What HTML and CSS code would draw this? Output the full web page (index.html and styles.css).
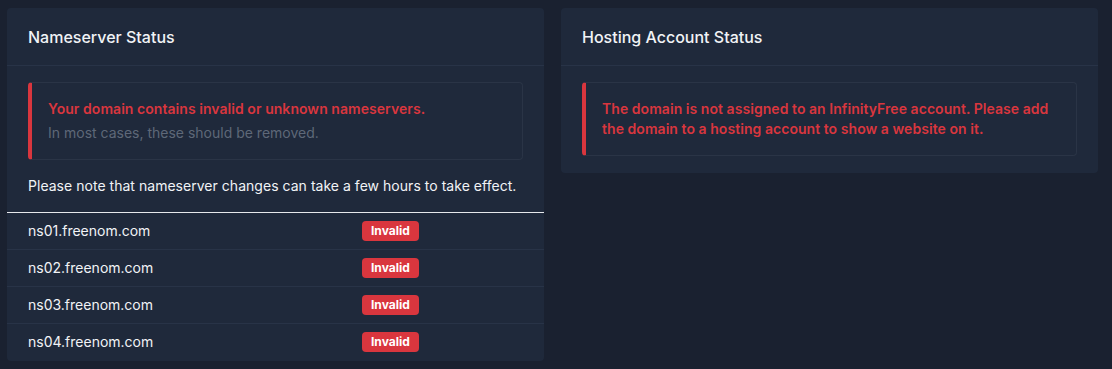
FILE: index.html
```html
<!DOCTYPE html>
<html lang="en">
<head>
  <meta charset="UTF-8"/>
  <title>Domain Status</title>
  <link rel="stylesheet" href="styles.css">
</head>
<body>
  <div class="grid">
    <div class="card">
      <div class="card-header">Nameserver Status</div>
      <div class="card-body">
        <div class="alert">
          <p class="alert-title">Your domain contains invalid or unknown nameservers.</p>
          <p class="alert-sub">In most cases, these should be removed.</p>
        </div>
        <p class="note">Please note that nameserver changes can take a few hours to take effect.</p>
      </div>
      <div class="ns-table">
        <div class="ns-row"><span>ns01.freenom.com</span><span class="badge">Invalid</span></div>
        <div class="ns-row"><span>ns02.freenom.com</span><span class="badge">Invalid</span></div>
        <div class="ns-row"><span>ns03.freenom.com</span><span class="badge">Invalid</span></div>
        <div class="ns-row"><span>ns04.freenom.com</span><span class="badge">Invalid</span></div>
      </div>
    </div>

    <div class="card">
      <div class="card-header">Hosting Account Status</div>
      <div class="card-body card-body-last">
        <div class="alert">
          <p class="alert-title">The domain is not assigned to an InfinityFree account. Please add the domain to a hosting account to show a website on it.</p>
        </div>
      </div>
    </div>
  </div>
</body>
</html>
```

FILE: styles.css
```css
* { box-sizing:border-box; margin:0; padding:0 }
html, body {
  width:100%; height:100%;
  font-family:'Inter', 'Liberation Sans', sans-serif;
  background:#1a2130; color:#f1f3f6;
  font-size:14px; line-height:20px;
}
.grid {
  display:grid; grid-template-columns:537px 537px; gap:17px;
  align-items:start; padding:8px 14px 0 7px;
}
.card { background:#1f293b; border-radius:4px; overflow:hidden }
.card-header {
  padding:19px 21px 18px; font-size:16px; font-weight:500; line-height:20px;
  border-bottom:1px solid #283347;
}
.card-body { padding:16px 21px }
.card-body-last { padding-bottom:17px }
.alert {
  border:1px solid #2a3446; border-left:4px solid #d9363e; border-radius:4px;
  padding:16px;
}
.alert-title { color:#d9363e; font-weight:600; letter-spacing:.05px }
.alert-sub { color:#5e6878; margin-top:4px }
.note { margin-top:16px; letter-spacing:.03px }
.ns-table { border-top:1px solid #e6e8ec; padding-bottom:1px }
.ns-row {
  display:grid; grid-template-columns:334px auto; align-items:center;
  padding:8px 21px; border-top:1px solid #283347; height:37px;
}
.ns-row:first-child { border-top:none; height:36px }
.badge {
  justify-self:start; background:#d9363e; color:#fff;
  font-size:12px; font-weight:700; line-height:20px;
  padding:0 9px; border-radius:4px;
}
```
